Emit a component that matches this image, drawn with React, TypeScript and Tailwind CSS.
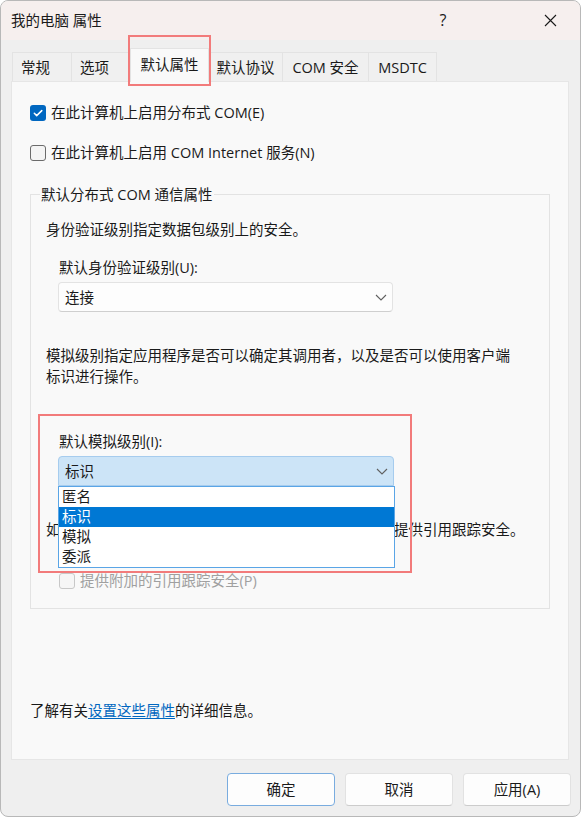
import React from 'react'

const tabs = [
  { label: '常规', w: 'w-[60px]', pad: 'pl-[8px] border-l' },
  { label: '选项', w: 'w-[58px]', pad: 'pl-[8px]' },
  { label: '默认属性', w: 'w-[79px]', selected: true },
  { label: '默认协议', w: 'w-[74px]', pad: 'justify-center' },
  { label: 'COM 安全', w: 'w-[86px]', pad: 'justify-center' },
  { label: 'MSDTC', w: 'w-[68px]', pad: 'justify-center' },
]

const levels = ['匿名', '标识', '模拟', '委派']

function Chevron() {
  return (
    <svg width="12" height="7" viewBox="0 0 12 7" fill="none">
      <polyline points="1,1 6,6 11,1" stroke="#606060" strokeWidth="1.1" />
    </svg>
  )
}

function Checkbox({ checked, disabled, label }: { checked?: boolean; disabled?: boolean; label: string }) {
  return (
    <div className="flex items-center h-[21px]">
      {checked ? (
        <span className="w-[16px] h-[16px] rounded-[3px] bg-[#0067c0] flex items-center justify-center">
          <svg width="12" height="12" viewBox="0 0 12 12" fill="none">
            <path d="M2.3 6.2l2.4 2.4L9.8 3.6" stroke="white" strokeWidth="1.5" strokeLinecap="round" strokeLinejoin="round" />
          </svg>
        </span>
      ) : (
        <span
          className={
            disabled
              ? 'w-[16px] h-[16px] rounded-[3px] border border-[#c8c8c8] bg-[#f6f6f6]'
              : 'w-[16px] h-[16px] rounded-[3px] border border-[#6b6b6b] bg-[#f4f4f4]'
          }
        />
      )}
      <span className={disabled ? 'ml-[5px] text-[#a0a0a0]' : 'ml-[5px]'}>{label}</span>
    </div>
  )
}

export default function App() {
  return (
    <div className="w-[581px] h-[817px] bg-white">
      <div className="w-[581px] h-[817px] flex flex-col rounded-[8px] border border-[#b8b8b8] overflow-hidden bg-[#efefef] text-[14.5px] leading-[21px] text-[#1a1a1a] font-['Open_Sans','Noto_Sans_CJK_SC',sans-serif]">
        {/* Title bar */}
        <div className="h-[39px] shrink-0 flex items-center pl-[10px] pr-[10px] bg-[#f6efee]">
          <span>我的电脑 属性</span>
          <div className="ml-auto flex items-center">
            <span className="w-[40px] text-center text-[16px]">?</span>
            <span className="w-[40px] ml-[67px] flex justify-center">
              <svg width="13" height="13" viewBox="0 0 13 13" fill="none">
                <path d="M1 1l11 11M12 1L1 12" stroke="#1a1a1a" strokeWidth="1.1" />
              </svg>
            </span>
          </div>
        </div>

        {/* Tabs */}
        <div className="h-[41px] shrink-0 flex items-end pl-[11px]">
          {tabs.map((t) =>
            t.selected ? (
              <div
                key={t.label}
                className={`${t.w} relative z-10 -mb-px h-[34px] flex items-center justify-center pb-[3px] bg-[#f9f9f9] border-x border-t border-[#e3e3e3]`}
              >
                {t.label}
                <div className="absolute -left-[3px] -top-[14px] w-[83px] h-[51px] border-2 border-[#f27b7b] pointer-events-none" />
              </div>
            ) : (
              <div
                key={t.label}
                className={`${t.w} ${t.pad} h-[29px] flex items-center bg-[#f0f0f0] border-t border-r border-[#e3e3e3]`}
              >
                {t.label}
              </div>
            )
          )}
        </div>

        {/* Panel */}
        <div className="ml-[10px] w-[558px] h-[679px] shrink-0 flex flex-col bg-[#f9f9f9] border border-[#e6e6e6] px-[18px] pt-[20px]">
          <Checkbox checked label="在此计算机上启用分布式 COM(E)" />
          <div className="mt-[19px]">
            <Checkbox label="在此计算机上启用 COM Internet 服务(N)" />
          </div>

          {/* Group */}
          <div className="relative mt-[31px] border border-[#e3e3e3] pl-[15px] pt-[24px] pb-[17px]">
            <span className="absolute left-[9px] -top-[11px] px-[1px] bg-[#f9f9f9]">默认分布式 COM 通信属性</span>
            <p>身份验证级别指定数据包级别上的安全。</p>
            <div className="pl-[12px]">
              <p className="mt-[17px] pl-[1px]">默认身份验证级别(U):</p>
              <div className="mt-[4px] w-[335px] h-[30px] flex items-center justify-between pl-[6px] pr-[5px] bg-[#fdfdfd] border border-[#e3e3e3] border-b-[#cfcfcf] rounded-[4px]">
                <span>连接</span>
                <Chevron />
              </div>
            </div>
            <p className="mt-[33px]">
              模拟级别指定应用程序是否可以确定其调用者，以及是否可以使用客户端
              <br />
              标识进行操作。
            </p>
            <div className="pl-[12px]">
              <p className="mt-[44px] pl-[1px]">默认模拟级别(I):</p>
              <div className="relative mt-[4px] w-[336px]">
                <div className="h-[30px] flex items-center justify-between pl-[6px] pr-[5px] bg-[#cce4f7] border border-[#a6ccee] rounded-t-[4px]">
                  <span>标识</span>
                  <Chevron />
                </div>
                {/* open list */}
                <div className="absolute left-0 top-full z-10 w-[337px] bg-white border border-[#5aa5e6] leading-[20px]">
                  {levels.map((l) => (
                    <div
                      key={l}
                      className={l === '标识' ? 'h-[20px] pl-[3px] bg-[#0078d4] text-white' : 'h-[20px] pl-[3px]'}
                    >
                      {l}
                    </div>
                  ))}
                </div>
              </div>
            </div>
            <p className="mt-[33px] whitespace-nowrap">如果使用身份验证并且默认模拟级别不是匿名，则可以提供引用跟踪安全。</p>
            <div className="mt-[30px] pl-[13px]">
              <Checkbox disabled label="提供附加的引用跟踪安全(P)" />
            </div>
            <div className="absolute left-[7px] top-[219px] w-[374px] h-[159px] z-20 border-2 border-[#f27b7b] pointer-events-none" />
          </div>

          <p className="mt-[91px]">
            了解有关<a className="text-[#0067c0] underline underline-offset-2">设置这些属性</a>的详细信息。
          </p>
        </div>

        {/* Buttons */}
        <div className="flex justify-end gap-[10px] pt-[13px] pr-[9px]">
          <button className="w-[108px] h-[33px] rounded-[4px] bg-[#fdfdfd] border border-[#79acdf]">确定</button>
          <button className="w-[108px] h-[33px] rounded-[4px] bg-[#fdfdfd] border border-[#e2e2e2] border-b-[#cccccc]">取消</button>
          <button className="w-[108px] h-[33px] rounded-[4px] bg-[#fdfdfd] border border-[#e2e2e2] border-b-[#cccccc]">应用(A)</button>
        </div>
      </div>
    </div>
  )
}
